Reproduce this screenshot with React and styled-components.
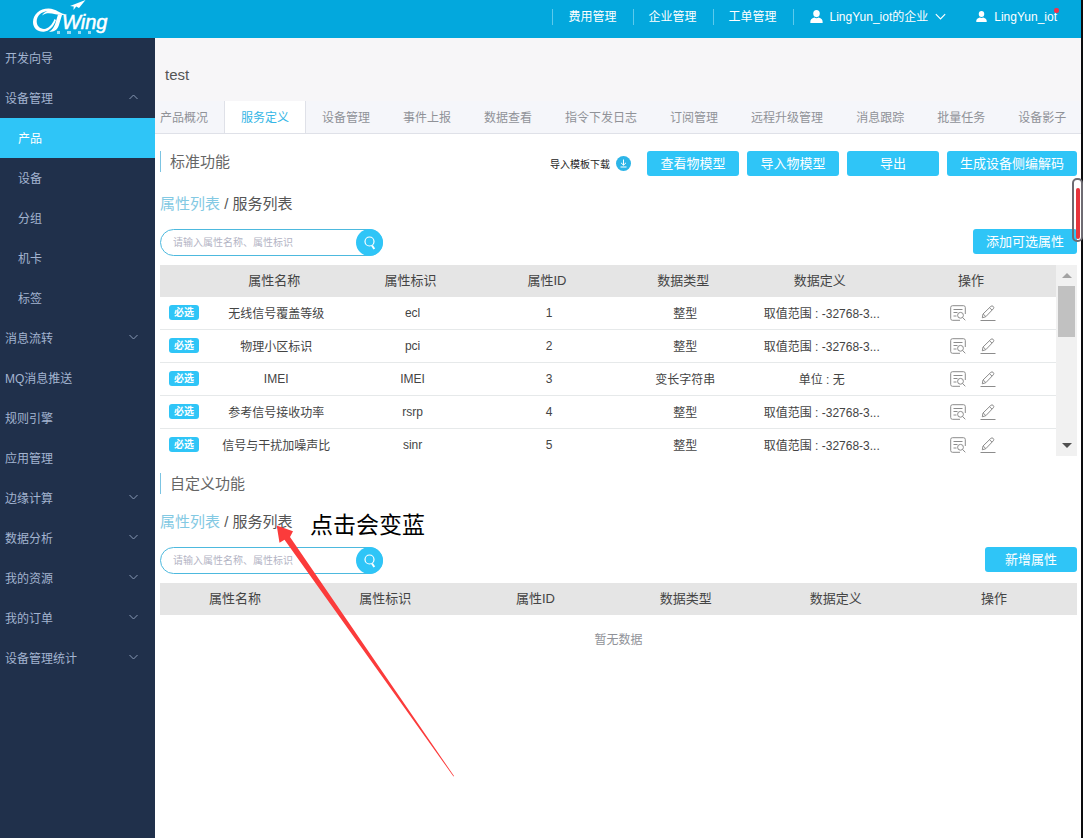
import React from "react";
import styled, { createGlobalStyle } from "styled-components";

const BLUE = "#2fc5f7";

const Global = createGlobalStyle`
  * { box-sizing: border-box; }
  body {
    margin: 0;
    background: #fff;
    color: #444;
    font-family: "Liberation Sans", "Noto Sans CJK SC", sans-serif;
    font-size: 12px;
  }
  button, input { font-family: inherit; }
  a { color: inherit; text-decoration: none; }
`;

const Page = styled.div`
  display: flex;
  flex-direction: column;
  min-height: 100vh;
  border-right: 2px solid #0c0c0e;
`;

const Header = styled.header`
  display: flex;
  align-items: flex-start;
  justify-content: space-between;
  height: 38px;
  padding: 0 24px 0 32px;
  background: #03a8dd;
  color: #fff;
`;

const TopNav = styled.nav`
  display: flex;
  align-items: center;
  height: 33px;
`;

const TopLink = styled.a`
  height: 16px;
  padding: 0 16px 0 15px;
  border-left: 1px solid #5ccaec;
  line-height: 16px;
`;

const Account = styled.a`
  position: relative;
  display: flex;
  align-items: center;
  gap: 7px;
  height: 16px;
  padding-left: 16px;
  border-left: ${(p) => (p.$divided ? "1px solid #5ccaec" : "0")};
  margin-left: ${(p) => (p.$divided ? "0" : "14px")};
  line-height: 16px;
`;

const AlertDot = styled.i`
  position: absolute;
  top: -1px;
  right: -2px;
  width: 5px;
  height: 5px;
  border-radius: 2px;
  background: #f5314b;
`;

const Body = styled.div`
  display: flex;
  flex: 1;
`;

const Sidebar = styled.nav`
  flex: 0 0 155px;
  background: #20304b;
`;

const SideItem = styled.a`
  display: flex;
  align-items: center;
  justify-content: space-between;
  height: 40px;
  padding: 0 17px 2px ${(p) => (p.$sub ? "18px" : "5px")};
  background: ${(p) => (p.$active ? BLUE : "transparent")};
  color: ${(p) => (p.$active ? "#fff" : "#a3b4d0")};
`;

const Main = styled.main`
  position: relative;
  flex: 1;
  min-width: 0;
`;

const TitleBar = styled.div`
  display: flex;
  align-items: flex-end;
  height: 63px;
  padding: 0 10px 16px;
  background: #f7f6f8;
`;

const PageTitle = styled.h1`
  margin: 0;
  color: #555;
  font-size: 15px;
  font-weight: 400;
  line-height: 20px;
`;

const Tabs = styled.nav`
  display: flex;
  height: 33px;
  padding-left: 5px;
  border-bottom: 1px solid #dfe1e8;
  background: #f5f6fa;
  overflow: hidden;
`;

const Tab = styled.a`
  flex: none;
  padding: 0 16px;
  border-right: 1px solid ${(p) => (p.$active ? "#dfe1e8" : "transparent")};
  background: ${(p) => (p.$active ? "#fff" : "transparent")};
  color: ${(p) => (p.$active ? "#35b6e6" : "#909298")};
  line-height: 34px;

  &:first-child {
    padding-left: 0;
    border-right-color: #dfe1e8;
  }
`;

const Content = styled.div`
  padding: 17px 4px 0 5px;
`;

const SectionHead = styled.div`
  display: flex;
  align-items: flex-start;
  justify-content: space-between;
`;

const SectionTitle = styled.h2`
  margin: 0;
  padding-left: 9px;
  border-left: 1px solid #7cc4e2;
  color: #666;
  font-size: 15px;
  font-weight: 400;
  line-height: 21px;
`;

const Actions = styled.div`
  display: flex;
  align-items: center;
  gap: 8px;
`;

const Button = styled.button`
  min-width: 92px;
  height: 25px;
  padding: 0 13px;
  border: 0;
  border-radius: 3px;
  background: ${BLUE};
  color: #fff;
  font-size: 13px;
  line-height: 25px;
`;

const TemplateLink = styled.a`
  display: flex;
  align-items: center;
  gap: 6px;
  margin-right: 8px;
  color: #222;
  font-size: 10px;
`;

const ListSwitch = styled.div`
  margin-top: 18px;
  color: #555;
  font-size: 15px;
  line-height: 20px;
`;

const ListLink = styled.a`
  color: ${(p) => (p.$current ? "#83c9e3" : "#555")};
`;

const Toolbar = styled.div`
  display: flex;
  align-items: flex-start;
  justify-content: space-between;
  margin: 15px 0 9px;
`;

const SearchBox = styled.form`
  display: flex;
  width: 223px;
  height: 27px;
  border: 1px solid #4db9de;
  border-radius: 14px;
`;

const SearchInput = styled.input`
  flex: 1;
  min-width: 0;
  padding: 0 0 0 12px;
  border: 0;
  outline: 0;
  background: transparent;
  font-size: 10px;

  &::placeholder { color: #b3b4c4; }
`;

const SearchButton = styled.button`
  display: flex;
  align-items: center;
  justify-content: center;
  width: 27px;
  height: 27px;
  margin: -1px;
  padding: 0;
  border: 0;
  border-radius: 50%;
  background: ${BLUE};
`;

const TableFrame = styled.div`
  display: flex;
  height: 191px;
  margin-bottom: 17px;
  overflow: hidden;
`;

const TableView = styled.div`
  flex: 1;
  min-width: 0;
`;

const Table = styled.table`
  width: 100%;
  border-spacing: 0;
  table-layout: fixed;
  text-align: center;
`;

const HeadCell = styled.th`
  width: ${(p) => p.$width || "auto"};
  height: 32px;
  padding: 0 ${(p) => (p.$shift ? "4px" : "0")} 3px 0;
  background: #e5e5e5;
  color: #444;
  font-size: 13px;
  font-weight: 400;
`;

const Cell = styled.td`
  height: 33px;
  padding: 0 0 1px;
  border-bottom: 1px solid #e6e9ea;
  overflow: hidden;
  white-space: nowrap;
`;

const Badge = styled.span`
  display: inline-block;
  width: 30px;
  height: 15px;
  border-radius: 3px;
  background: ${BLUE};
  color: #fff;
  font-size: 10px;
  font-weight: 700;
  line-height: 15px;
  vertical-align: middle;
`;

const RowActions = styled.div`
  display: flex;
  align-items: center;
  justify-content: center;
  gap: 14px;
`;

const IconButton = styled.button`
  display: flex;
  padding: 0;
  border: 0;
  background: none;
`;

const ScrollTrack = styled.div`
  display: flex;
  flex-direction: column;
  align-items: center;
  width: 21px;
  background: #f1f1f1;
`;

const ScrollArrow = styled.span`
  display: flex;
  align-items: center;
  height: 21px;
`;

const ScrollThumb = styled.div`
  width: 17px;
  height: 51px;
  margin-bottom: auto;
  background: #c1c1c1;
`;

const EmptyNote = styled.p`
  margin: 15px 0 0;
  color: #909298;
  line-height: 20px;
  text-align: center;
`;

const Note = styled.span`
  position: absolute;
  top: 471px;
  left: 155px;
  color: #000;
  font-size: 23px;
  line-height: 32px;
`;

const Arrow = styled.svg`
  position: absolute;
  top: 487px;
  left: 121px;
  pointer-events: none;
`;

const ScrollMark = styled.div`
  position: absolute;
  top: 140px;
  right: -2px;
  width: 11px;
  height: 64px;
  padding: 8px 1px 1px 2px;
  border: 2px solid #6e6b72;
  border-radius: 5px;

  &::before {
    content: "";
    display: block;
    height: 100%;
    border-radius: 2px;
    background: #e8343c;
  }
`;

function Logo() {
  return (
    <svg width="80" height="37" viewBox="32 0 80 37" role="img" aria-label="CTWing">
      <path
        d="M68.500 14C62 16 57 8.500 48.500 8.500C39.500 8.500 33 14.500 33 22C33 28.500 38 32.200 44 31.700C49 31.200 53.500 27 56 20L54.500 19C52 25 48.500 28.700 44.200 28.900C40 29 36.700 26 36.700 21.500C36.700 15.500 41.500 11.500 47.500 11.200C44.500 12.200 43 13.500 42 15.500C50 9.500 58 18 68.500 14Z"
        fill="#fff"
      />
      <path d="M58 14.500L62 15L58.800 25.500C57.300 30 54.500 31.700 49 31.800C52.500 29.800 54 27.200 55.300 23.500Z" fill="#fff" />
      <path d="M70 6L85.500 0L79 8L76.200 6.500L73.500 10L73.700 6.500Z" fill="#fff" />
      <text
        x="62"
        y="29"
        fill="#fff"
        stroke="#fff"
        strokeWidth="0.5"
        fontFamily="Liberation Sans, sans-serif"
        fontSize="20"
        fontStyle="italic"
      >
        Wing
      </text>
      <g fill="#9adcf2">
        <path d="M57 31h3v3h-3zM67 31h4v3h-4zM78 31h3v3h-3zM88 31h3v3h-3z" />
      </g>
    </svg>
  );
}

const Person = ({ size }) => (
  <svg width={size} height={size} viewBox="0 0 12 12" fill="#fff" aria-hidden="true">
    <ellipse cx="6" cy="3.300" rx="3" ry="3.300" />
    <path d="M0.300 12C0 9 1.500 7.800 4 7C5.200 7.700 6.800 7.700 8 7C10.500 7.800 12 9 11.700 12Z" />
  </svg>
);

const Chevron = ({ up, color = "#8798b5", width = 9 }) => (
  <svg width={width} height={width > 9 ? 7 : 6} viewBox="0 0 9 6" fill="none" stroke={color} aria-hidden="true">
    <path d={up ? "M0.500 5L4.500 1L8.500 5" : "M0.500 1L4.500 5L8.500 1"} />
  </svg>
);

const Magnifier = () => (
  <svg width="14" height="16" viewBox="0 0 14 16" fill="none" stroke="#fff" aria-hidden="true">
    <circle cx="6.500" cy="6.500" r="4.500" strokeWidth="1.200" />
    <path d="M9 10.500L11.300 14" strokeWidth="2" />
  </svg>
);

const DownloadMark = () => (
  <svg width="15" height="15" viewBox="0 0 15 15" fill="none" stroke="#fff" aria-hidden="true">
    <circle cx="7.500" cy="7.500" r="7.500" fill="#2cb5e8" stroke="none" />
    <path d="M7.500 3.500V9M5 6.800L7.500 9.200L10 6.800M4.500 11H10.500" />
  </svg>
);

const DetailIcon = () => (
  <svg width="16" height="16" viewBox="0 0 16 16" fill="none" stroke="#8c8c8c" aria-hidden="true">
    <path d="M15.300 9V2.500Q15.300 0.700 13.500 0.700H2.500Q0.700 0.700 0.700 2.500V13.500Q0.700 15.300 2.500 15.300H10M3.500 4.500H12.500M3.500 7.500H7.500M3.500 11H6.500" />
    <circle cx="10.500" cy="10.300" r="2.900" />
    <path d="M12.600 12.500L15.300 15.300" />
  </svg>
);

const EditIcon = () => (
  <svg width="16" height="16" viewBox="0 0 16 16" fill="none" stroke="#8c8c8c" aria-hidden="true">
    <path d="M0.500 15.500H15.500M2.300 12.800L3 9L10.800 1.400Q12 0.300 13.200 1.400Q14.400 2.600 13.300 3.800L5.800 11.700ZM3.200 9L5.800 11.500M9.500 2.700L12 5.100" />
  </svg>
);

const sideItems = [
  { text: "开发向导" },
  { text: "设备管理", open: true },
  { text: "产品", sub: true, active: true },
  { text: "设备", sub: true },
  { text: "分组", sub: true },
  { text: "机卡", sub: true },
  { text: "标签", sub: true },
  { text: "消息流转", more: true },
  { text: "MQ消息推送" },
  { text: "规则引擎" },
  { text: "应用管理" },
  { text: "边缘计算", more: true },
  { text: "数据分析", more: true },
  { text: "我的资源", more: true },
  { text: "我的订单", more: true },
  { text: "设备管理统计", more: true },
];

const tabs = [
  "产品概况", "服务定义", "设备管理", "事件上报", "数据查看", "指令下发日志",
  "订阅管理", "远程升级管理", "消息跟踪", "批量任务", "设备影子",
];

const columns = ["属性名称", "属性标识", "属性ID", "数据类型", "数据定义"];

const RANGE = "取值范围 : -32768-3...";
const rows = [
  ["无线信号覆盖等级", "ecl", "1", "整型", RANGE],
  ["物理小区标识", "pci", "2", "整型", RANGE],
  ["IMEI", "IMEI", "3", "变长字符串", "单位 : 无"],
  ["参考信号接收功率", "rsrp", "4", "整型", RANGE],
  ["信号与干扰加噪声比", "sinr", "5", "整型", RANGE],
];

function ListFilter({ action }) {
  return (
    <>
      <ListSwitch>
        <ListLink href="#properties" $current>属性列表</ListLink>
        {" / "}
        <ListLink href="#services">服务列表</ListLink>
      </ListSwitch>
      <Toolbar>
        <SearchBox>
          <SearchInput type="text" aria-label="搜索属性" placeholder="请输入属性名称、属性标识" />
          <SearchButton type="button" aria-label="搜索"><Magnifier /></SearchButton>
        </SearchBox>
        <Button type="button">{action}</Button>
      </Toolbar>
    </>
  );
}

function StandardTable() {
  return (
    <TableFrame>
      <TableView>
        <Table>
          <thead>
            <tr>
              <HeadCell $width="48px" />
              {columns.map((c) => <HeadCell key={c} $shift>{c}</HeadCell>)}
              <HeadCell $width="166px" $shift>操作</HeadCell>
            </tr>
          </thead>
          <tbody>
            {rows.map((row) => (
              <tr key={row[1]}>
                <Cell><Badge>必选</Badge></Cell>
                {row.map((value, i) => <Cell key={i}>{value}</Cell>)}
                <Cell>
                  <RowActions>
                    <IconButton type="button" aria-label="查看"><DetailIcon /></IconButton>
                    <IconButton type="button" aria-label="编辑"><EditIcon /></IconButton>
                  </RowActions>
                </Cell>
              </tr>
            ))}
          </tbody>
        </Table>
      </TableView>
      <ScrollTrack>
        <ScrollArrow>
          <svg width="10" height="5" aria-hidden="true"><path d="M0 5L5 0L10 5Z" fill="#a3a3a3" /></svg>
        </ScrollArrow>
        <ScrollThumb />
        <ScrollArrow>
          <svg width="10" height="5" aria-hidden="true"><path d="M0 0L5 5L10 0Z" fill="#505050" /></svg>
        </ScrollArrow>
      </ScrollTrack>
    </TableFrame>
  );
}

export default function App() {
  return (
    <Page>
      <Global />
      <Header>
        <Logo />
        <TopNav>
          <TopLink href="#fee">费用管理</TopLink>
          <TopLink href="#company">企业管理</TopLink>
          <TopLink href="#ticket">工单管理</TopLink>
          <Account href="#org" $divided>
            <Person size={13} />LingYun_iot的企业<Chevron color="#fff" width={11} />
          </Account>
          <Account href="#me">
            <Person size={11} />LingYun_iot<AlertDot />
          </Account>
        </TopNav>
      </Header>
      <Body>
        <Sidebar>
          {sideItems.map((item) => (
            <SideItem key={item.text} href="#menu" $sub={item.sub} $active={item.active}>
              {item.text}
              {(item.open || item.more) && <Chevron up={item.open} />}
            </SideItem>
          ))}
        </Sidebar>
        <Main>
          <TitleBar><PageTitle>test</PageTitle></TitleBar>
          <Tabs>
            {tabs.map((tab) => <Tab key={tab} href="#tab" $active={tab === "服务定义"}>{tab}</Tab>)}
          </Tabs>
          <Content>
            <SectionHead>
              <SectionTitle>标准功能</SectionTitle>
              <Actions>
                <TemplateLink href="#template">导入模板下载<DownloadMark /></TemplateLink>
                <Button type="button">查看物模型</Button>
                <Button type="button">导入物模型</Button>
                <Button type="button">导出</Button>
                <Button type="button">生成设备侧编解码</Button>
              </Actions>
            </SectionHead>
            <ListFilter action="添加可选属性" />
            <StandardTable />
            <SectionTitle>自定义功能</SectionTitle>
            <ListFilter action="新增属性" />
            <Table>
              <thead>
                <tr>
                  {columns.map((c) => <HeadCell key={c}>{c}</HeadCell>)}
                  <HeadCell $width="166px">操作</HeadCell>
                </tr>
              </thead>
            </Table>
            <EmptyNote>暂无数据</EmptyNote>
          </Content>
          <Note>点击会变蓝</Note>
          <Arrow width="180" height="254" viewBox="0 0 180 254" aria-hidden="true">
            <path d="M0.700 0.500L17 6.300L14 12L178 251L177.500 251.500L8.500 14.700L3.500 17.700Z" fill="#fb3b3b" />
          </Arrow>
          <ScrollMark />
        </Main>
      </Body>
    </Page>
  );
}
